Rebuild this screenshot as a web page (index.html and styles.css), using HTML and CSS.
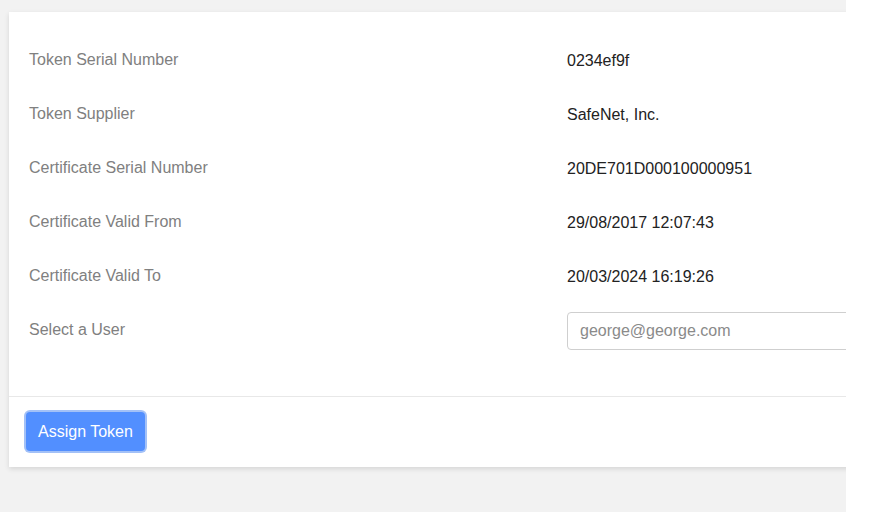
FILE: index.html
```html
<!DOCTYPE html>
<html>
<head>
<meta charset="utf-8">
<link rel="stylesheet" href="styles.css">
</head>
<body>
<div class="page">
  <div class="card">
    <div class="card-body">
      <div class="row"><div class="label">Token Serial Number</div><div class="value">0234ef9f</div></div>
      <div class="row"><div class="label">Token Supplier</div><div class="value">SafeNet, Inc.</div></div>
      <div class="row"><div class="label">Certificate Serial Number</div><div class="value">20DE701D000100000951</div></div>
      <div class="row"><div class="label">Certificate Valid From</div><div class="value">29/08/2017 12:07:43</div></div>
      <div class="row"><div class="label">Certificate Valid To</div><div class="value">20/03/2024 16:19:26</div></div>
      <div class="row"><div class="label">Select a User</div><div class="value"><input class="input" type="text" placeholder="george@george.com"></div></div>
    </div>
    <div class="card-footer">
      <button class="btn">Assign Token</button>
    </div>
  </div>
</div>
</body>
</html>
```

FILE: styles.css
```css
html, body {
  margin: 0;
  padding: 0;
  background: #ffffff;
  font-family: "Liberation Sans", Arial, sans-serif;
  font-size: 16px;
}
.page {
  width: 846px;
  height: 512px;
  background: #f2f2f2;
  overflow: hidden;
  padding-top: 12px;
  box-sizing: border-box;
}
.card {
  margin-left: 9px;
  width: 900px;
  background: #ffffff;
  box-shadow: 0 2px 5px rgba(0, 0, 0, 0.12);
}
.card-body {
  padding: 21px 0 39px 20px;
}
.row {
  display: grid;
  grid-template-columns: 538px 1fr;
  height: 54px;
  align-items: center;
}
.label {
  color: #808080;
  line-height: 18px;
}
.value {
  color: #222222;
  line-height: 18px;
  padding-top: 2px;
}
.input {
  display: block;
  box-sizing: border-box;
  width: 320px;
  height: 38px;
  margin-top: -1px;
  border: 1px solid #cfcfcf;
  border-radius: 4px;
  padding: 0 12px;
  font-family: "Liberation Sans", Arial, sans-serif;
  font-size: 16px;
  color: #222;
  outline: none;
}
.input::placeholder {
  color: #8a8a8a;
}
.card-footer {
  border-top: 1px solid #e8e8e8;
  padding: 15px 16px 16px;
}
.btn {
  display: block;
  height: 39px;
  padding: 0 12px;
  margin-left: 1px;
  background: #528fff;
  color: #ffffff;
  border: none;
  border-radius: 4px;
  box-shadow: 0 0 0 2px #a3c1f7;
  font-family: "Liberation Sans", Arial, sans-serif;
  font-size: 16px;
  line-height: 39px;
}
```
